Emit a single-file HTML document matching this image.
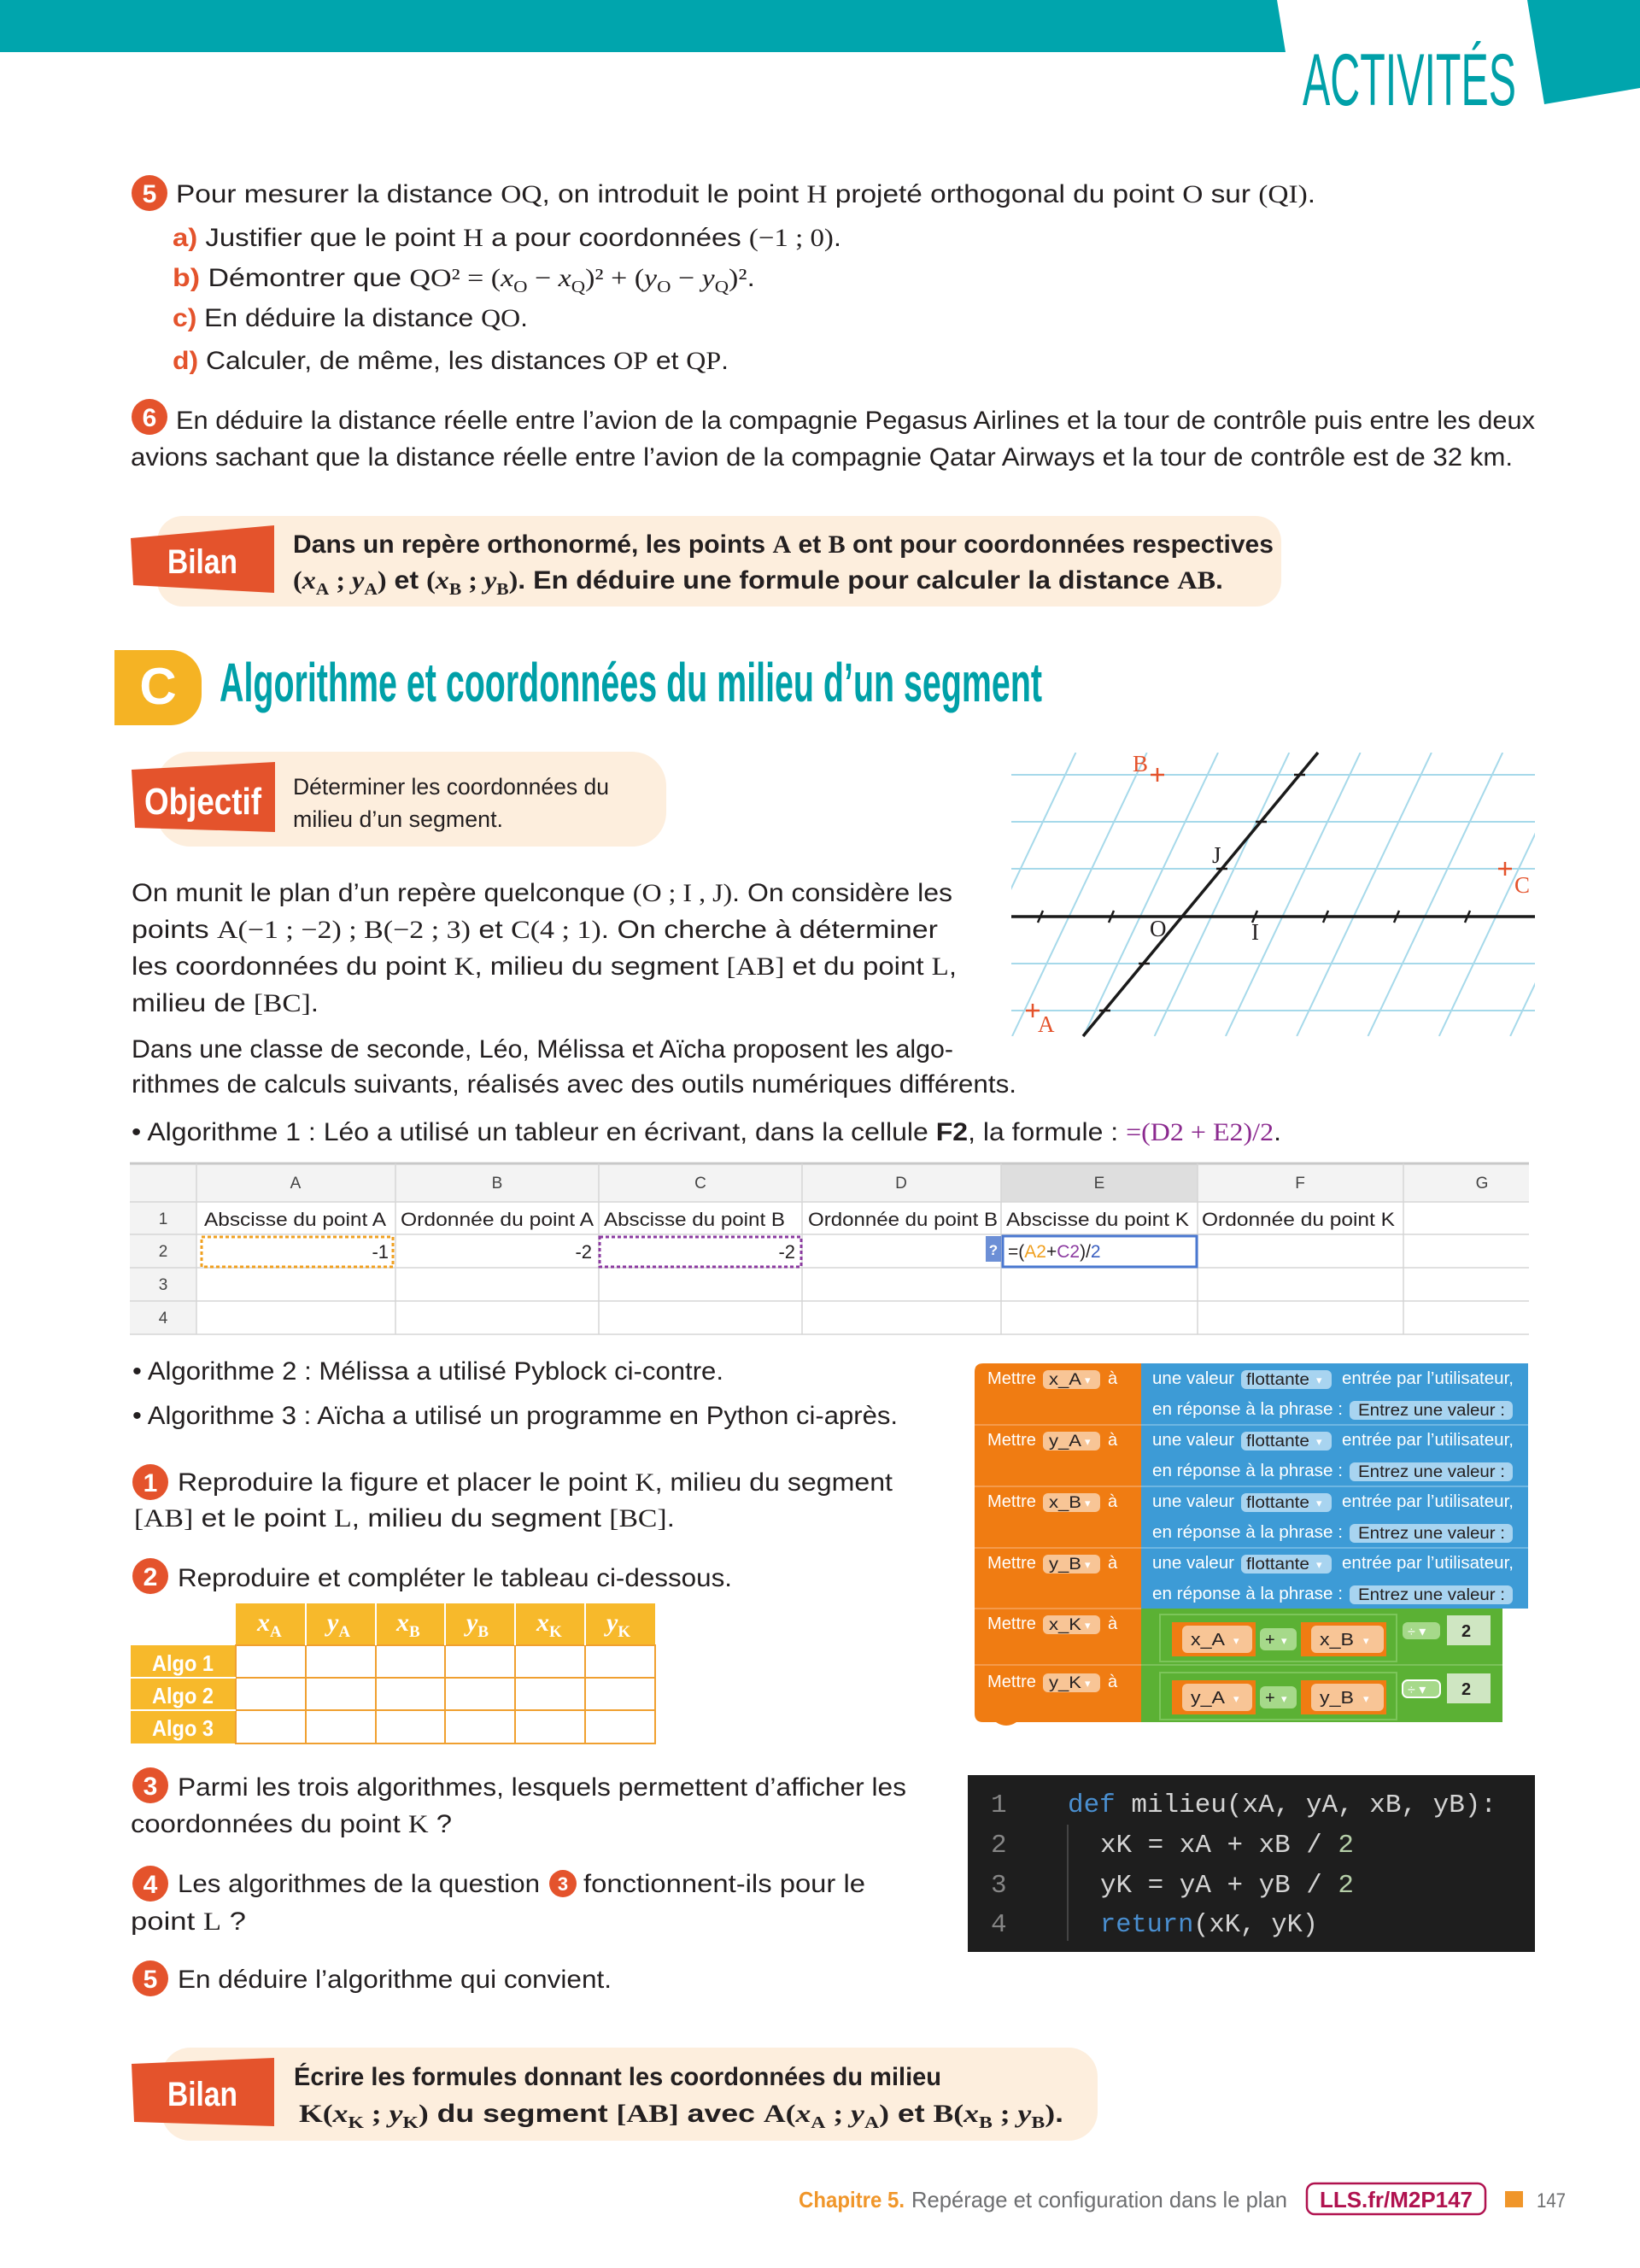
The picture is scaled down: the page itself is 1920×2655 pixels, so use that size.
<!DOCTYPE html>
<html><head><meta charset="utf-8"><style>
html,body{margin:0;padding:0;background:#fff;}
svg{display:block;}
text{font-family:"Liberation Sans",sans-serif;fill:#231f20;}
.s{font-family:"Liberation Serif",serif;}
.r{fill:#e4532c;font-weight:bold;}
.w{fill:#fff;}
.b{font-weight:bold;}
.m{font-family:"Liberation Mono",monospace;}
</style></head><body>
<svg width="1920" height="2655" viewBox="0 0 1920 2655" xmlns="http://www.w3.org/2000/svg">
<!-- header -->
<polygon points="0,0 1495,0 1505,61 0,61" fill="#00a5ad"/>
<polygon points="1788,0 1920,0 1920,103 1808,122" fill="#00a5ad"/>
<text x="1525" y="123" font-size="86" fill="#00a0a8" style="fill:#00a0a8" textLength="250" lengthAdjust="spacingAndGlyphs">ACTIVITÉS</text>

<!-- Q5 -->
<circle cx="175" cy="226" r="21" fill="#e4532c"/>
<text x="175" y="237" font-size="30" class="w b" text-anchor="middle">5</text>
<text x="206" y="237" font-size="30" textLength="1334" lengthAdjust="spacingAndGlyphs">Pour mesurer la distance <tspan class="s">OQ</tspan>, on introduit le point <tspan class="s">H</tspan> projeté orthogonal du point <tspan class="s">O</tspan> sur <tspan class="s">(QI)</tspan>.</text>
<text x="202" y="288" font-size="30" textLength="783" lengthAdjust="spacingAndGlyphs"><tspan class="r">a)</tspan> Justifier que le point <tspan class="s">H</tspan> a pour coordonnées <tspan class="s">(−1 ; 0)</tspan>.</text>
<text x="202" y="335" font-size="30" textLength="682" lengthAdjust="spacingAndGlyphs"><tspan class="r">b)</tspan> Démontrer que <tspan class="s">QO² = (<tspan font-style="italic">x</tspan><tspan font-size="20" dy="7">O</tspan><tspan dy="-7"> − </tspan><tspan font-style="italic">x</tspan><tspan font-size="20" dy="7">Q</tspan><tspan dy="-7">)² + (</tspan><tspan font-style="italic">y</tspan><tspan font-size="20" dy="7">O</tspan><tspan dy="-7"> − </tspan><tspan font-style="italic">y</tspan><tspan font-size="20" dy="7">Q</tspan><tspan dy="-7">)²</tspan></tspan>.</text>
<text x="202" y="382" font-size="30" textLength="416" lengthAdjust="spacingAndGlyphs"><tspan class="r">c)</tspan> En déduire la distance <tspan class="s">QO</tspan>.</text>
<text x="202" y="432" font-size="30" textLength="651" lengthAdjust="spacingAndGlyphs"><tspan class="r">d)</tspan> Calculer, de même, les distances <tspan class="s">OP</tspan> et <tspan class="s">QP</tspan>.</text>

<!-- Q6 -->
<circle cx="175" cy="488" r="21" fill="#e4532c"/>
<text x="175" y="499" font-size="30" class="w b" text-anchor="middle">6</text>
<text x="206" y="502" font-size="30" textLength="1591" lengthAdjust="spacingAndGlyphs">En déduire la distance réelle entre l’avion de la compagnie Pegasus Airlines et la tour de contrôle puis entre les deux</text>
<text x="153" y="545" font-size="30" textLength="1618" lengthAdjust="spacingAndGlyphs">avions sachant que la distance réelle entre l’avion de la compagnie Qatar Airways et la tour de contrôle est de 32 km.</text>

<!-- Bilan 1 -->
<rect x="184" y="604" width="1316" height="106" rx="30" fill="#fdeedd"/>
<polygon points="153,630 321,615 321,694 156,685" fill="#e4532c"/>
<text x="237" y="671" font-size="40" class="w b" text-anchor="middle" textLength="82" lengthAdjust="spacingAndGlyphs">Bilan</text>
<text x="343" y="647" font-size="30" class="b" textLength="1148" lengthAdjust="spacingAndGlyphs">Dans un repère orthonormé, les points <tspan class="s">A</tspan> et <tspan class="s">B</tspan> ont pour coordonnées respectives</text>
<text x="343" y="689" font-size="30" class="b" textLength="1089" lengthAdjust="spacingAndGlyphs"><tspan class="s">(<tspan font-style="italic">x</tspan><tspan font-size="20" dy="7">A</tspan><tspan dy="-7"> ; </tspan><tspan font-style="italic">y</tspan><tspan font-size="20" dy="7">A</tspan><tspan dy="-7">)</tspan></tspan> et <tspan class="s">(<tspan font-style="italic">x</tspan><tspan font-size="20" dy="7">B</tspan><tspan dy="-7"> ; </tspan><tspan font-style="italic">y</tspan><tspan font-size="20" dy="7">B</tspan><tspan dy="-7">)</tspan></tspan>. En déduire une formule pour calculer la distance <tspan class="s">AB</tspan>.</text>

<!-- Section C -->
<path d="M134,761 H200 A36,36 0 0 1 236,797 V813 A36,36 0 0 1 200,849 H134 Z" fill="#f5b324"/>
<text x="185" y="824" font-size="60" class="w b" text-anchor="middle">C</text>
<text x="257" y="821" font-size="64" class="b" style="fill:#00a0a8" textLength="963" lengthAdjust="spacingAndGlyphs">Algorithme et coordonnées du milieu d’un segment</text>

<!-- Objectif -->
<rect x="183" y="880" width="597" height="111" rx="40" fill="#fdeedd"/>
<polygon points="154,901 322,892 322,974 158,969" fill="#e4532c"/>
<text x="169" y="953" font-size="44" class="w b" textLength="137" lengthAdjust="spacingAndGlyphs">Objectif</text>
<text x="343" y="930" font-size="27" textLength="370" lengthAdjust="spacingAndGlyphs">Déterminer les coordonnées du</text>
<text x="343" y="968" font-size="27" textLength="246" lengthAdjust="spacingAndGlyphs">milieu d’un segment.</text>

<!-- paragraph -->
<text x="154" y="1055" font-size="30" textLength="961" lengthAdjust="spacingAndGlyphs">On munit le plan d’un repère quelconque <tspan class="s">(O ; I , J)</tspan>. On considère les</text>
<text x="154" y="1098" font-size="30" textLength="944" lengthAdjust="spacingAndGlyphs">points <tspan class="s">A(−1 ; −2) ; B(−2 ; 3)</tspan> et <tspan class="s">C(4 ; 1)</tspan>. On cherche à déterminer</text>
<text x="154" y="1141" font-size="30" textLength="966" lengthAdjust="spacingAndGlyphs">les coordonnées du point <tspan class="s">K</tspan>, milieu du segment <tspan class="s">[AB]</tspan> et du point <tspan class="s">L</tspan>,</text>
<text x="154" y="1184" font-size="30" textLength="219" lengthAdjust="spacingAndGlyphs">milieu de <tspan class="s">[BC]</tspan>.</text>
<text x="154" y="1238" font-size="30" textLength="962" lengthAdjust="spacingAndGlyphs">Dans une classe de seconde, Léo, Mélissa et Aïcha proposent les algo-</text>
<text x="154" y="1279" font-size="30" textLength="1036" lengthAdjust="spacingAndGlyphs">rithmes de calculs suivants, réalisés avec des outils numériques différents.</text>
<text x="154" y="1335" font-size="30" textLength="1346" lengthAdjust="spacingAndGlyphs">• Algorithme 1 : Léo a utilisé un tableur en écrivant, dans la cellule <tspan class="b">F2</tspan>, la formule : <tspan class="s" style="fill:#8b2a8f">=(D2 + E2)/2</tspan>.</text>

<!-- graph -->
<defs><clipPath id="gc"><rect x="1184" y="881" width="613" height="332"/></clipPath></defs>
<g clip-path="url(#gc)" stroke="#a6d9ea" stroke-width="2">
<line x1="1184" y1="907" x2="1797" y2="907"/><line x1="1184" y1="962" x2="1797" y2="962"/>
<line x1="1184" y1="1017" x2="1797" y2="1017"/><line x1="1184" y1="1128" x2="1797" y2="1128"/>
<line x1="1184" y1="1183" x2="1797" y2="1183"/>
<line x1="1176.1" y1="881" x2="1018.4" y2="1213"/>
<line x1="1259.4" y1="881" x2="1101.7" y2="1213"/>
<line x1="1342.7" y1="881" x2="1185" y2="1213"/>
<line x1="1426" y1="881" x2="1268.3" y2="1213"/>
<line x1="1509.3" y1="881" x2="1351.6" y2="1213"/>
<line x1="1592.6" y1="881" x2="1434.9" y2="1213"/>
<line x1="1675.9" y1="881" x2="1518.2" y2="1213"/>
<line x1="1759.2" y1="881" x2="1601.5" y2="1213"/>
<line x1="1842.5" y1="881" x2="1684.8" y2="1213"/>
<line x1="1925.8" y1="881" x2="1768.1" y2="1213"/>
<line x1="2009.1" y1="881" x2="1851.4" y2="1213"/>
</g>
<g stroke="#1a1a1a" stroke-width="3.5">
<line x1="1184" y1="1073" x2="1797" y2="1073"/>
<line x1="1543" y1="881" x2="1268" y2="1213"/>
</g>
<g stroke="#1a1a1a" stroke-width="2.5">
<line x1="1221" y1="1066" x2="1215" y2="1080"/><line x1="1304" y1="1066" x2="1298" y2="1080"/>
<line x1="1472" y1="1066" x2="1466" y2="1080"/><line x1="1555" y1="1066" x2="1549" y2="1080"/>
<line x1="1638" y1="1066" x2="1632" y2="1080"/><line x1="1721" y1="1066" x2="1715" y2="1080"/>
<line x1="1515" y1="907" x2="1528" y2="907"/><line x1="1470" y1="962" x2="1483" y2="962"/>
<line x1="1424" y1="1017" x2="1437" y2="1017"/><line x1="1333" y1="1128" x2="1346" y2="1128"/>
<line x1="1287" y1="1183" x2="1300" y2="1183"/>
</g>
<g stroke="#e4532c" stroke-width="2.5">
<line x1="1347" y1="907" x2="1363" y2="907"/><line x1="1355" y1="899" x2="1355" y2="915"/>
<line x1="1754" y1="1017" x2="1770" y2="1017"/><line x1="1762" y1="1009" x2="1762" y2="1025"/>
<line x1="1201" y1="1183" x2="1217" y2="1183"/><line x1="1209" y1="1175" x2="1209" y2="1191"/>
</g>
<g font-size="27" class="s">
<text x="1326" y="903" class="s" style="fill:#e4532c">B</text>
<text x="1773" y="1045" class="s" style="fill:#e4532c">C</text>
<text x="1215" y="1208" class="s" style="fill:#e4532c">A</text>
<text x="1419" y="1010" class="s">J</text>
<text x="1346" y="1096" class="s">O</text>
<text x="1465" y="1100" class="s">I</text>
</g>

<!-- spreadsheet -->
<rect x="152" y="1362" width="1638" height="45" fill="#f3f3f3"/>
<rect x="152" y="1362" width="78" height="200" fill="#f3f3f3"/>
<rect x="1172" y="1362" width="230" height="45" fill="#dedede"/>
<line x1="152" y1="1362" x2="1790" y2="1362" stroke="#c8c8c8" stroke-width="3"/>
<g stroke="#d6d6d6" stroke-width="1.5">
<line x1="152" y1="1407" x2="1790" y2="1407"/><line x1="152" y1="1445" x2="1790" y2="1445"/>
<line x1="152" y1="1484" x2="1790" y2="1484"/><line x1="152" y1="1523" x2="1790" y2="1523"/>
<line x1="152" y1="1562" x2="1790" y2="1562"/>
<line x1="230" y1="1362" x2="230" y2="1562"/><line x1="463" y1="1362" x2="463" y2="1562"/>
<line x1="701" y1="1362" x2="701" y2="1562"/><line x1="939" y1="1362" x2="939" y2="1562"/>
<line x1="1172" y1="1362" x2="1172" y2="1562"/><line x1="1402" y1="1362" x2="1402" y2="1562"/>
<line x1="1643" y1="1362" x2="1643" y2="1562"/>
</g>
<g font-size="19" fill="#444" text-anchor="middle">
<text x="346" y="1391" style="fill:#444">A</text><text x="582" y="1391" style="fill:#444">B</text>
<text x="820" y="1391" style="fill:#444">C</text><text x="1055" y="1391" style="fill:#444">D</text>
<text x="1287" y="1391" style="fill:#444">E</text><text x="1522" y="1391" style="fill:#444">F</text>
<text x="1735" y="1391" style="fill:#444">G</text>
<text x="191" y="1433" style="fill:#444">1</text><text x="191" y="1471" style="fill:#444">2</text>
<text x="191" y="1510" style="fill:#444">3</text><text x="191" y="1549" style="fill:#444">4</text>
</g>
<g font-size="22">
<text x="239" y="1435" textLength="213" lengthAdjust="spacingAndGlyphs">Abscisse du point A</text>
<text x="469" y="1435" textLength="226" lengthAdjust="spacingAndGlyphs">Ordonnée du point A</text>
<text x="707" y="1435" textLength="212" lengthAdjust="spacingAndGlyphs">Abscisse du point B</text>
<text x="946" y="1435" textLength="222" lengthAdjust="spacingAndGlyphs">Ordonnée du point B</text>
<text x="1178" y="1435" textLength="214" lengthAdjust="spacingAndGlyphs">Abscisse du point K</text>
<text x="1407" y="1435" textLength="226" lengthAdjust="spacingAndGlyphs">Ordonnée du point K</text>
<text x="455" y="1473" text-anchor="end">-1</text>
<text x="693" y="1473" text-anchor="end">-2</text>
<text x="931" y="1473" text-anchor="end">-2</text>
</g>
<rect x="236" y="1448" width="224" height="35" fill="none" stroke="#f0a020" stroke-width="3" stroke-dasharray="4,3"/>
<rect x="702" y="1448" width="236" height="35" fill="none" stroke="#8b3aa0" stroke-width="3" stroke-dasharray="4,3"/>
<rect x="1154" y="1447" width="18" height="30" fill="#6c8fd6"/>
<text x="1163" y="1469" font-size="17" class="w b" text-anchor="middle">?</text>
<rect x="1174" y="1447" width="227" height="36" fill="#fff" stroke="#4a78d0" stroke-width="3"/>
<text x="1180" y="1472" font-size="21">=(<tspan style="fill:#f0a020">A2</tspan>+<tspan style="fill:#8b3aa0">C2</tspan>)/<tspan style="fill:#3a5fc0">2</tspan></text>

<!-- left Q list -->
<text x="155" y="1615" font-size="30" textLength="692" lengthAdjust="spacingAndGlyphs">• Algorithme 2 : Mélissa a utilisé Pyblock ci-contre.</text>
<text x="155" y="1667" font-size="30" textLength="896" lengthAdjust="spacingAndGlyphs">• Algorithme 3 : Aïcha a utilisé un programme en Python ci-après.</text>
<circle cx="176" cy="1735" r="21" fill="#e4532c"/><text x="176" y="1746" font-size="30" class="w b" text-anchor="middle">1</text>
<text x="208" y="1745" font-size="30" textLength="837" lengthAdjust="spacingAndGlyphs">Reproduire la figure et placer le point <tspan class="s">K</tspan>, milieu du segment</text>
<text x="157" y="1787" font-size="30" textLength="633" lengthAdjust="spacingAndGlyphs"><tspan class="s">[AB]</tspan> et le point <tspan class="s">L</tspan>, milieu du segment <tspan class="s">[BC]</tspan>.</text>
<circle cx="176" cy="1845" r="21" fill="#e4532c"/><text x="176" y="1856" font-size="30" class="w b" text-anchor="middle">2</text>
<text x="208" y="1857" font-size="30" textLength="649" lengthAdjust="spacingAndGlyphs">Reproduire et compléter le tableau ci-dessous.</text>

<!-- answer table -->
<rect x="276" y="1877" width="491" height="49" fill="#f7b92b"/>
<rect x="153" y="1926" width="123" height="115" fill="#f7b92b"/>
<g stroke="#f0a030" stroke-width="2" fill="none">
<rect x="276" y="1926" width="491" height="115"/>
<line x1="276" y1="1964" x2="767" y2="1964"/><line x1="276" y1="2002" x2="767" y2="2002"/>
<line x1="358" y1="1926" x2="358" y2="2041"/><line x1="440" y1="1926" x2="440" y2="2041"/>
<line x1="521" y1="1926" x2="521" y2="2041"/><line x1="603" y1="1926" x2="603" y2="2041"/>
<line x1="685" y1="1926" x2="685" y2="2041"/>
</g>
<g stroke="#fff" stroke-width="2">
<line x1="358" y1="1877" x2="358" y2="1926"/><line x1="440" y1="1877" x2="440" y2="1926"/>
<line x1="521" y1="1877" x2="521" y2="1926"/><line x1="603" y1="1877" x2="603" y2="1926"/>
<line x1="685" y1="1877" x2="685" y2="1926"/>
<line x1="153" y1="1964" x2="276" y2="1964"/><line x1="153" y1="2002" x2="276" y2="2002"/>
</g>
<g font-size="30" class="s w b" font-style="italic">
<text x="301" y="1909" class="s w">x<tspan font-size="19" dy="7" font-style="normal">A</tspan></text>
<text x="383" y="1909" class="s w">y<tspan font-size="19" dy="7" font-style="normal">A</tspan></text>
<text x="464" y="1909" class="s w">x<tspan font-size="19" dy="7" font-style="normal">B</tspan></text>
<text x="546" y="1909" class="s w">y<tspan font-size="19" dy="7" font-style="normal">B</tspan></text>
<text x="628" y="1909" class="s w">x<tspan font-size="19" dy="7" font-style="normal">K</tspan></text>
<text x="710" y="1909" class="s w">y<tspan font-size="19" dy="7" font-style="normal">K</tspan></text>
</g>
<text x="178" y="1956" font-size="26" class="w b" textLength="72" lengthAdjust="spacingAndGlyphs">Algo 1</text>
<text x="178" y="1994" font-size="26" class="w b" textLength="72" lengthAdjust="spacingAndGlyphs">Algo 2</text>
<text x="178" y="2032" font-size="26" class="w b" textLength="72" lengthAdjust="spacingAndGlyphs">Algo 3</text>

<circle cx="176" cy="2090" r="21" fill="#e4532c"/><text x="176" y="2101" font-size="30" class="w b" text-anchor="middle">3</text>
<text x="208" y="2102" font-size="30" textLength="853" lengthAdjust="spacingAndGlyphs">Parmi les trois algorithmes, lesquels permettent d’afficher les</text>
<text x="153" y="2145" font-size="30" textLength="376" lengthAdjust="spacingAndGlyphs">coordonnées du point <tspan class="s">K</tspan> ?</text>
<circle cx="176" cy="2205" r="21" fill="#e4532c"/><text x="176" y="2216" font-size="30" class="w b" text-anchor="middle">4</text>
<text x="208" y="2215" font-size="30" textLength="424" lengthAdjust="spacingAndGlyphs">Les algorithmes de la question</text>
<circle cx="659" cy="2205" r="16" fill="#e4532c"/><text x="659" y="2213" font-size="22" class="w b" text-anchor="middle">3</text>
<text x="683" y="2215" font-size="30" textLength="330" lengthAdjust="spacingAndGlyphs">fonctionnent-ils pour le</text>
<text x="153" y="2259" font-size="30" textLength="135" lengthAdjust="spacingAndGlyphs">point <tspan class="s">L</tspan> ?</text>
<circle cx="176" cy="2316" r="21" fill="#e4532c"/><text x="176" y="2327" font-size="30" class="w b" text-anchor="middle">5</text>
<text x="208" y="2327" font-size="30" textLength="508" lengthAdjust="spacingAndGlyphs">En déduire l’algorithme qui convient.</text>

<!-- Pyblock -->
<path d="M1151,1596 H1336 V2016 H1190 Q1178,2024 1166,2016 H1151 Q1141,2016 1141,2006 V1606 Q1141,1596 1151,1596 Z" fill="#f07c12"/>
<rect x="1336" y="1596" width="453" height="287" fill="#3d9bd6"/>
<rect x="1336" y="1883" width="423" height="133" fill="#5bb134"/>
<g stroke="#f6a35e" stroke-width="1.5">
<line x1="1141" y1="1668" x2="1336" y2="1668"/><line x1="1141" y1="1740" x2="1336" y2="1740"/>
<line x1="1141" y1="1812" x2="1336" y2="1812"/><line x1="1141" y1="1883" x2="1336" y2="1883"/>
<line x1="1141" y1="1949" x2="1336" y2="1949"/>
</g>
<g stroke="#7ec0e6" stroke-width="1.5">
<line x1="1336" y1="1668" x2="1789" y2="1668"/><line x1="1336" y1="1740" x2="1789" y2="1740"/>
<line x1="1336" y1="1812" x2="1789" y2="1812"/>
</g>
<line x1="1336" y1="1949" x2="1759" y2="1949" stroke="#86c866" stroke-width="1.5"/>
<g font-size="20">
<!-- rows 1-4 -->
<g>
<text x="1156" y="1620" class="w" textLength="57" lengthAdjust="spacingAndGlyphs">Mettre</text>
<rect x="1221" y="1604" width="67" height="22" rx="6" fill="#f8c596"/><text x="1228" y="1621" font-size="19" textLength="38" lengthAdjust="spacingAndGlyphs">x_A</text><text x="1270" y="1620" font-size="13" class="w">▾</text>
<text x="1297" y="1620" class="w">à</text>
<text x="1349" y="1620" class="w" textLength="96" lengthAdjust="spacingAndGlyphs">une valeur</text>
<rect x="1453" y="1604" width="106" height="22" rx="6" fill="#a8d4f0"/><text x="1459" y="1621" font-size="19" textLength="74" lengthAdjust="spacingAndGlyphs">flottante</text><text x="1541" y="1620" font-size="13" class="w">▾</text>
<text x="1571" y="1620" class="w" textLength="201" lengthAdjust="spacingAndGlyphs">entrée par l’utilisateur,</text>
<text x="1349" y="1656" class="w" textLength="223" lengthAdjust="spacingAndGlyphs">en réponse à la phrase :</text>
<rect x="1580" y="1640" width="191" height="22" rx="6" fill="#a8d4f0"/><text x="1590" y="1657" font-size="19" textLength="172" lengthAdjust="spacingAndGlyphs">Entrez une valeur :</text>
</g>
<g transform="translate(0,72)">
<text x="1156" y="1620" class="w" textLength="57" lengthAdjust="spacingAndGlyphs">Mettre</text>
<rect x="1221" y="1604" width="67" height="22" rx="6" fill="#f8c596"/><text x="1228" y="1621" font-size="19" textLength="38" lengthAdjust="spacingAndGlyphs">y_A</text><text x="1270" y="1620" font-size="13" class="w">▾</text>
<text x="1297" y="1620" class="w">à</text>
<text x="1349" y="1620" class="w" textLength="96" lengthAdjust="spacingAndGlyphs">une valeur</text>
<rect x="1453" y="1604" width="106" height="22" rx="6" fill="#a8d4f0"/><text x="1459" y="1621" font-size="19" textLength="74" lengthAdjust="spacingAndGlyphs">flottante</text><text x="1541" y="1620" font-size="13" class="w">▾</text>
<text x="1571" y="1620" class="w" textLength="201" lengthAdjust="spacingAndGlyphs">entrée par l’utilisateur,</text>
<text x="1349" y="1656" class="w" textLength="223" lengthAdjust="spacingAndGlyphs">en réponse à la phrase :</text>
<rect x="1580" y="1640" width="191" height="22" rx="6" fill="#a8d4f0"/><text x="1590" y="1657" font-size="19" textLength="172" lengthAdjust="spacingAndGlyphs">Entrez une valeur :</text>
</g>
<g transform="translate(0,144)">
<text x="1156" y="1620" class="w" textLength="57" lengthAdjust="spacingAndGlyphs">Mettre</text>
<rect x="1221" y="1604" width="67" height="22" rx="6" fill="#f8c596"/><text x="1228" y="1621" font-size="19" textLength="38" lengthAdjust="spacingAndGlyphs">x_B</text><text x="1270" y="1620" font-size="13" class="w">▾</text>
<text x="1297" y="1620" class="w">à</text>
<text x="1349" y="1620" class="w" textLength="96" lengthAdjust="spacingAndGlyphs">une valeur</text>
<rect x="1453" y="1604" width="106" height="22" rx="6" fill="#a8d4f0"/><text x="1459" y="1621" font-size="19" textLength="74" lengthAdjust="spacingAndGlyphs">flottante</text><text x="1541" y="1620" font-size="13" class="w">▾</text>
<text x="1571" y="1620" class="w" textLength="201" lengthAdjust="spacingAndGlyphs">entrée par l’utilisateur,</text>
<text x="1349" y="1656" class="w" textLength="223" lengthAdjust="spacingAndGlyphs">en réponse à la phrase :</text>
<rect x="1580" y="1640" width="191" height="22" rx="6" fill="#a8d4f0"/><text x="1590" y="1657" font-size="19" textLength="172" lengthAdjust="spacingAndGlyphs">Entrez une valeur :</text>
</g>
<g transform="translate(0,216)">
<text x="1156" y="1620" class="w" textLength="57" lengthAdjust="spacingAndGlyphs">Mettre</text>
<rect x="1221" y="1604" width="67" height="22" rx="6" fill="#f8c596"/><text x="1228" y="1621" font-size="19" textLength="38" lengthAdjust="spacingAndGlyphs">y_B</text><text x="1270" y="1620" font-size="13" class="w">▾</text>
<text x="1297" y="1620" class="w">à</text>
<text x="1349" y="1620" class="w" textLength="96" lengthAdjust="spacingAndGlyphs">une valeur</text>
<rect x="1453" y="1604" width="106" height="22" rx="6" fill="#a8d4f0"/><text x="1459" y="1621" font-size="19" textLength="74" lengthAdjust="spacingAndGlyphs">flottante</text><text x="1541" y="1620" font-size="13" class="w">▾</text>
<text x="1571" y="1620" class="w" textLength="201" lengthAdjust="spacingAndGlyphs">entrée par l’utilisateur,</text>
<text x="1349" y="1656" class="w" textLength="223" lengthAdjust="spacingAndGlyphs">en réponse à la phrase :</text>
<rect x="1580" y="1640" width="191" height="22" rx="6" fill="#a8d4f0"/><text x="1590" y="1657" font-size="19" textLength="172" lengthAdjust="spacingAndGlyphs">Entrez une valeur :</text>
</g>
<!-- green rows -->
<g>
<text x="1156" y="1907" class="w" textLength="57" lengthAdjust="spacingAndGlyphs">Mettre</text>
<rect x="1221" y="1891" width="67" height="22" rx="6" fill="#f8c596"/><text x="1228" y="1908" font-size="19" textLength="38" lengthAdjust="spacingAndGlyphs">x_K</text><text x="1270" y="1907" font-size="13" class="w">▾</text>
<text x="1297" y="1907" class="w">à</text>
<rect x="1358" y="1890" width="277" height="55" fill="none" stroke="#7cc55a" stroke-width="2"/>
<rect x="1372" y="1899" width="98" height="40" fill="#f07c12"/>
<rect x="1384" y="1903" width="82" height="32" rx="6" fill="#f8c596"/><text x="1394" y="1926" font-size="20" textLength="40" lengthAdjust="spacingAndGlyphs">x_A</text><text x="1444" y="1925" font-size="13" class="w">▾</text>
<rect x="1475" y="1906" width="43" height="26" rx="6" fill="#a6d98a"/><text x="1481" y="1926" font-size="20">+</text><text x="1500" y="1925" font-size="13" class="w">▾</text>
<rect x="1523" y="1899" width="100" height="40" fill="#f07c12"/>
<rect x="1535" y="1903" width="85" height="32" rx="6" fill="#f8c596"/><text x="1545" y="1926" font-size="20" textLength="40" lengthAdjust="spacingAndGlyphs">x_B</text><text x="1596" y="1925" font-size="13" class="w">▾</text>
<rect x="1642" y="1899" width="44" height="20" rx="6" fill="#a6d98a"/><text x="1648" y="1915" font-size="16" class="w">÷ ▾</text>
<rect x="1694" y="1891" width="51" height="35" fill="#cfe6c2"/><text x="1711" y="1916" font-size="20" class="b">2</text>
</g>
<g transform="translate(0,68)">
<text x="1156" y="1907" class="w" textLength="57" lengthAdjust="spacingAndGlyphs">Mettre</text>
<rect x="1221" y="1891" width="67" height="22" rx="6" fill="#f8c596"/><text x="1228" y="1908" font-size="19" textLength="38" lengthAdjust="spacingAndGlyphs">y_K</text><text x="1270" y="1907" font-size="13" class="w">▾</text>
<text x="1297" y="1907" class="w">à</text>
<rect x="1358" y="1890" width="277" height="55" fill="none" stroke="#7cc55a" stroke-width="2"/>
<rect x="1372" y="1899" width="98" height="40" fill="#f07c12"/>
<rect x="1384" y="1903" width="82" height="32" rx="6" fill="#f8c596"/><text x="1394" y="1926" font-size="20" textLength="40" lengthAdjust="spacingAndGlyphs">y_A</text><text x="1444" y="1925" font-size="13" class="w">▾</text>
<rect x="1475" y="1906" width="43" height="26" rx="6" fill="#a6d98a"/><text x="1481" y="1926" font-size="20">+</text><text x="1500" y="1925" font-size="13" class="w">▾</text>
<rect x="1523" y="1899" width="100" height="40" fill="#f07c12"/>
<rect x="1535" y="1903" width="85" height="32" rx="6" fill="#f8c596"/><text x="1545" y="1926" font-size="20" textLength="40" lengthAdjust="spacingAndGlyphs">y_B</text><text x="1596" y="1925" font-size="13" class="w">▾</text>
<rect x="1642" y="1899" width="44" height="20" rx="6" fill="#a6d98a" stroke="#fff" stroke-width="2"/><text x="1648" y="1915" font-size="16" class="w">÷ ▾</text>
<rect x="1694" y="1891" width="51" height="35" fill="#cfe6c2"/><text x="1711" y="1916" font-size="20" class="b">2</text>
</g>
</g>

<!-- code -->
<rect x="1133" y="2078" width="664" height="207" fill="#1e1e1e"/>
<line x1="1250" y1="2136" x2="1250" y2="2272" stroke="#444" stroke-width="2"/>
<g font-size="31" class="m">
<text x="1160" y="2121" class="m" style="fill:#858585">1</text>
<text x="1160" y="2168" class="m" style="fill:#858585">2</text>
<text x="1160" y="2215" class="m" style="fill:#858585">3</text>
<text x="1160" y="2261" class="m" style="fill:#858585">4</text>
<text x="1250" y="2121" class="m" style="fill:#d4d4d4" textLength="502" lengthAdjust="spacingAndGlyphs"><tspan style="fill:#4a8fd0">def</tspan> milieu(xA, yA, xB, yB):</text>
<text x="1288" y="2168" class="m" style="fill:#d4d4d4" textLength="297" lengthAdjust="spacingAndGlyphs">xK = xA + xB / <tspan style="fill:#b5cea8">2</tspan></text>
<text x="1288" y="2215" class="m" style="fill:#d4d4d4" textLength="297" lengthAdjust="spacingAndGlyphs">yK = yA + yB / <tspan style="fill:#b5cea8">2</tspan></text>
<text x="1288" y="2261" class="m" style="fill:#d4d4d4" textLength="255" lengthAdjust="spacingAndGlyphs"><tspan style="fill:#4a8fd0">return</tspan>(xK, yK)</text>
</g>

<!-- Bilan 2 -->
<rect x="189" y="2397" width="1096" height="109" rx="34" fill="#fdeedd"/>
<polygon points="154,2416 321,2409 321,2489 157,2484" fill="#e4532c"/>
<text x="237" y="2465" font-size="40" class="w b" text-anchor="middle" textLength="82" lengthAdjust="spacingAndGlyphs">Bilan</text>
<text x="344" y="2441" font-size="30" class="b" textLength="758" lengthAdjust="spacingAndGlyphs">Écrire les formules donnant les coordonnées du milieu</text>
<text x="350" y="2484" font-size="30" class="b" textLength="895" lengthAdjust="spacingAndGlyphs"><tspan class="s">K(<tspan font-style="italic">x</tspan><tspan font-size="20" dy="7">K</tspan><tspan dy="-7"> ; </tspan><tspan font-style="italic">y</tspan><tspan font-size="20" dy="7">K</tspan><tspan dy="-7">)</tspan></tspan> du segment <tspan class="s">[AB]</tspan> avec <tspan class="s">A(<tspan font-style="italic">x</tspan><tspan font-size="20" dy="7">A</tspan><tspan dy="-7"> ; </tspan><tspan font-style="italic">y</tspan><tspan font-size="20" dy="7">A</tspan><tspan dy="-7">)</tspan></tspan> et <tspan class="s">B(<tspan font-style="italic">x</tspan><tspan font-size="20" dy="7">B</tspan><tspan dy="-7"> ; </tspan><tspan font-style="italic">y</tspan><tspan font-size="20" dy="7">B</tspan><tspan dy="-7">)</tspan></tspan>.</text>

<!-- footer -->
<text x="935" y="2584" font-size="26" class="b" style="fill:#f0962a" textLength="124" lengthAdjust="spacingAndGlyphs">Chapitre 5.</text>
<text x="1067" y="2584" font-size="26" style="fill:#6d6e70" textLength="440" lengthAdjust="spacingAndGlyphs">Repérage et configuration dans le plan</text>
<rect x="1530" y="2556" width="209" height="36" rx="9" fill="#fff" stroke="#b0124f" stroke-width="2.5"/>
<text x="1545" y="2584" font-size="26" class="b" style="fill:#b0124f" textLength="179" lengthAdjust="spacingAndGlyphs">LLS.fr/M2P147</text>
<rect x="1762" y="2565" width="21" height="19" fill="#f0962a"/>
<text x="1799" y="2584" font-size="24" style="fill:#6d6e70" textLength="34" lengthAdjust="spacingAndGlyphs">147</text>
</svg>
</body></html>
